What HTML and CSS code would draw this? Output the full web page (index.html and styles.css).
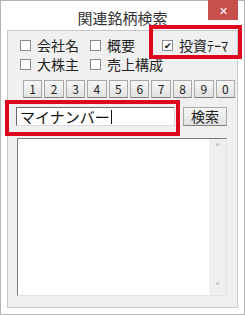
FILE: index.html
```html
<!DOCTYPE html>
<html lang="ja">
<head>
  <meta charset="UTF-8" />
  <title>関連銘柄検索</title>
  <link rel="stylesheet" href="styles.css">
</head>
<body>

  <div class="window">
    <div class="titlebar">
      <span class="title">関連銘柄検索</span>
      <span class="close">&#x2715;</span>
    </div>

    <div class="panel">
      <div class="checks">
        <label class="check"><span class="box"></span>会社名</label>
        <label class="check"><span class="box"></span>概要</label>
        <label class="check"><span class="box checked">&#x2714;</span>投資ﾃｰﾏ</label>
        <label class="check"><span class="box"></span>大株主</label>
        <label class="check"><span class="box"></span>売上構成</label>
      </div>

      <div class="digits">
        <span class="key">1</span><span class="key">2</span><span class="key">3</span><span class="key">4</span><span class="key">5</span><span class="key">6</span><span class="key">7</span><span class="key">8</span><span class="key">9</span><span class="key">0</span>
      </div>

      <div class="search-row">
        <div class="field">マイナンバー<span class="caret"></span></div>
        <span class="btn">検索</span>
      </div>

      <div class="list">
        <div class="list-body"></div>
        <div class="scroll">
          <span class="arrow">&#x2c4;</span>
          <span class="arrow">&#x2c5;</span>
        </div>
      </div>
    </div>

    <!-- annotation boxes -->
    <div class="mark mark-theme"></div>
    <div class="mark mark-field"></div>
  </div>

</body>
</html>
```

FILE: styles.css
```css
body {
  margin: 0;
  font-family: "Noto Sans CJK JP", "Noto Sans", sans-serif;
  color: #222;
}
.window {
  position: relative;
  width: 243px;
  height: 313px;
  border: 1px solid #b4b4b4;
  background: #fff;
}
.titlebar {
  height: 29px;
  display: flex;
  justify-content: center;
  align-items: center;
  position: relative;
}
.title {
  font-size: 15px;
  color: #333;
  margin-top: 3px;
}
.close {
  position: absolute;
  top: -1px;
  right: 6px;
  width: 30px;
  height: 20px;
  background: #c7504d;
  color: #fff;
  font-size: 11px;
  display: flex;
  justify-content: center;
  align-items: center;
}
.panel {
  margin-left: 6px;
  width: 229px;
  height: 276px;
  border: 1px solid #c8c8c8;
  background: #f0f0f0;
}
.checks {
  display: grid;
  grid-template-columns: 70px 72px 66px;
  grid-auto-rows: 19px;
  margin-top: 5px;
  padding-left: 12px;
}
.check {
  display: flex;
  align-items: center;
  font-size: 14px;
  line-height: 19px;
  white-space: nowrap;
  color: #222;
}
.box {
  flex: none;
  width: 9px;
  height: 9px;
  border: 1px solid #8a8a8a;
  background: #fff;
  margin-right: 6px;
  font-size: 9px;
  line-height: 9px;
  text-align: center;
  color: #111;
}
.digits {
  display: flex;
  margin-top: 6px;
  margin-left: 15px;
}
.key {
  width: 18px;
  height: 16px;
  margin-right: 2px;
  border: 1px solid #a9a9a9;
  border-bottom-color: #7f7f7f;
  background: linear-gradient(#f6f6f6, #e2e2e2);
  font-size: 12px;
  line-height: 16px;
  text-align: center;
  color: #222;
}
.search-row {
  display: flex;
  align-items: flex-start;
  margin-top: 9px;
  margin-left: 8px;
}
.field {
  width: 154px;
  height: 17px;
  border: 1px solid #dcdcdc;
  border-top-color: #6a6a6a;
  border-left-color: #6a6a6a;
  background: #fff;
  padding-left: 3px;
  font-size: 15px;
  line-height: 17px;
  color: #111;
  display: flex;
  align-items: center;
}
.caret {
  width: 1px;
  height: 14px;
  background: #111;
  margin-left: 1px;
}
.btn {
  margin-left: 8px;
  width: 42px;
  height: 17px;
  border: 1px solid #a9a9a9;
  border-bottom-color: #7f7f7f;
  background: linear-gradient(#f6f6f6, #e2e2e2);
  font-size: 14px;
  line-height: 17px;
  text-align: center;
}
.list {
  display: flex;
  margin-top: 12px;
  margin-left: 9px;
  width: 208px;
  height: 156px;
  border: 1px solid #e2e2e2;
  border-top-color: #7a7a7a;
  border-left-color: #7a7a7a;
  background: #fff;
}
.list-body {
  flex: 1;
}
.scroll {
  width: 17px;
  background: #efefef;
  display: flex;
  flex-direction: column;
  justify-content: space-between;
  align-items: center;
}
.arrow {
  font-size: 13px;
  line-height: 17px;
  color: #a8a8a8;
  font-weight: bold;
}
.mark {
  position: absolute;
  border: 4px solid #e0061f;
}
.mark-theme {
  left: 148px;
  top: 24px;
  width: 85px;
  height: 26px;
}
.mark-field {
  left: 4px;
  top: 99px;
  width: 167px;
  height: 28px;
}
```
